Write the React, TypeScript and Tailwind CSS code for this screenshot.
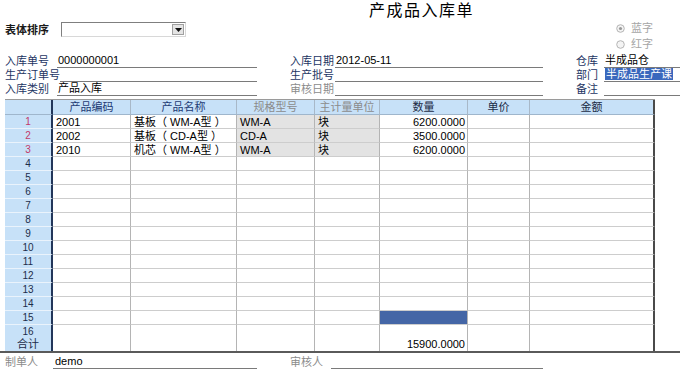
import React from "react";

const COLS = "grid-cols-[48px_78px_106px_78px_65px_88px_62px_125px]";

type Row = { n: string; code: string; name: string; spec: string; unit: string; qty: string };

const rows: Row[] = [
  { n: "1", code: "2001", name: "基板（ WM-A型 ）", spec: "WM-A", unit: "块", qty: "6200.0000" },
  { n: "2", code: "2002", name: "基板（ CD-A型 ）", spec: "CD-A", unit: "块", qty: "3500.0000" },
  { n: "3", code: "2010", name: "机芯（ WM-A型 ）", spec: "WM-A", unit: "块", qty: "6200.0000" },
];
for (let i = 4; i <= 15; i++) rows.push({ n: String(i), code: "", name: "", spec: "", unit: "", qty: "" });

function Field({
  label,
  value,
  labelW,
  lineW,
  grey,
  highlight,
}: {
  label: string;
  value?: string;
  labelW: string;
  lineW: string;
  grey?: boolean;
  highlight?: boolean;
}) {
  return (
    <div className="flex items-end h-full">
      <div className={`${labelW} shrink-0 leading-[13px] ${grey ? "text-[#8c8c8c]" : "text-[#1d3563]"}`}>{label}</div>
      <div className={`${lineW} h-full border-b border-[#7a7a7a] flex items-end pl-[1px]`}>
        {value ? (
          highlight ? (
            <span className="bg-[#3a68bd] text-white leading-[12px] h-[12px] px-[1px] mb-[1px] whitespace-nowrap">{value}</span>
          ) : (
            <span className="leading-[13px] text-black">{value}</span>
          )
        ) : null}
      </div>
    </div>
  );
}

function FieldRow({ h, a, b, c }: { h: string; a: React.ReactNode; b: React.ReactNode; c: React.ReactNode }) {
  return (
    <div className={`flex ${h}`}>
      <div className="w-[290px] pl-[5px] h-full">{a}</div>
      <div className="w-[286px] h-full">{b}</div>
      <div className="w-[104px] h-full">{c}</div>
    </div>
  );
}

export default function App() {
  const cell = "border-r border-b border-[#b4b4b4] border-b-[#cdcdcd] h-full";
  return (
    <div
      className="w-[680px] h-[370px] bg-white overflow-hidden text-[11px] text-black"
      style={{ fontFamily: '"Liberation Sans", "Noto Sans CJK SC", sans-serif' }}
    >
      {/* top area */}
      <div className="flex h-[55px]">
        <div className="w-[614px]">
          <div className="h-[22px] flex items-center pl-[369px] text-[16px] tracking-[1.5px] text-black">
            产成品入库单
          </div>
          <div className="h-[15px] flex items-center">
            <div className="w-[61px] pl-[5px] font-bold text-[#1a1a1a] leading-[14px]">表体排序</div>
            <div className="w-[125px] h-[15px] border border-[#7f7f7f] border-r-[#d8d8d8] border-b-[#d8d8d8] bg-white flex justify-end items-center pr-[1px]">
              <div className="w-[12px] h-[11px] bg-[#e4e4e4] border border-[#a0a0a0] flex items-center justify-center">
                <svg width="7" height="4" viewBox="0 0 7 4">
                  <polygon points="0,0 7,0 3.5,4" fill="#111" />
                </svg>
              </div>
            </div>
          </div>
        </div>
        <div className="w-[66px] pt-[20px] text-[#a6a6a6]">
          <div className="h-[16px] flex items-center gap-[6px] pl-[2px]">
            <svg width="9" height="9" viewBox="0 0 9 9">
              <circle cx="4.5" cy="4.5" r="3.8" fill="#f4f4f4" stroke="#b4b4b4" strokeWidth="1" />
              <circle cx="4.5" cy="4.5" r="1.6" fill="#9a9a9a" />
            </svg>
            <span className="leading-[12px]">蓝字</span>
          </div>
          <div className="h-[16px] flex items-center gap-[6px] pl-[2px]">
            <svg width="9" height="9" viewBox="0 0 9 9">
              <circle cx="4.5" cy="4.5" r="3.8" fill="#f4f4f4" stroke="#b4b4b4" strokeWidth="1" />
            </svg>
            <span className="leading-[12px]">红字</span>
          </div>
        </div>
      </div>

      {/* fields */}
      <FieldRow
        h="h-[13px]"
        a={<Field label="入库单号" value="0000000001" labelW="w-[52px]" lineW="w-[200px]" />}
        b={<Field label="入库日期" value="2012-05-11" labelW="w-[45px]" lineW="w-[208px]" />}
        c={<Field label="仓库" value="半成品仓" labelW="w-[28px]" lineW="w-[76px]" />}
      />
      <FieldRow
        h="h-[14px]"
        a={<Field label="生产订单号" labelW="w-[55px]" lineW="w-[197px]" />}
        b={<Field label="生产批号" labelW="w-[45px]" lineW="w-[208px]" />}
        c={<Field label="部门" value="半成品生产课" labelW="w-[28px]" lineW="w-[76px]" highlight />}
      />
      <FieldRow
        h="h-[14px]"
        a={<Field label="入库类别" value="产品入库" labelW="w-[52px]" lineW="w-[200px]" />}
        b={<Field label="审核日期" labelW="w-[45px]" lineW="w-[208px]" grey />}
        c={<Field label="备注" labelW="w-[28px]" lineW="w-[76px]" />}
      />

      {/* table */}
      <div className="mt-[3px] pl-[5px] border-b-2 border-[#5a5a5a] w-[680px]">
        <div className="w-[650px] border-t border-[#9a9a9a]">
          {/* header */}
          <div className={`grid ${COLS} h-[15px] bg-[#c7e1f8]`}>
            <div className="border-r-2 border-r-[#22365a] border-b border-b-[#9fb6cc] h-full"></div>
            <div className="border-r border-[#a8b8c8] border-b border-b-[#9fb6cc] h-full flex items-center justify-center text-[#1d3a74] leading-[13px]">产品编码</div>
            <div className="border-r border-[#a8b8c8] border-b border-b-[#9fb6cc] h-full flex items-center justify-center text-[#1d3a74] leading-[13px]">产品名称</div>
            <div className="border-r border-[#a8b8c8] border-b border-b-[#9fb6cc] h-full flex items-center justify-center text-[#8b8b8b] leading-[13px]">规格型号</div>
            <div className="border-r border-[#a8b8c8] border-b border-b-[#9fb6cc] h-full flex items-center justify-center text-[#8b8b8b] leading-[13px]">主计量单位</div>
            <div className="border-r border-[#a8b8c8] border-b border-b-[#9fb6cc] h-full flex items-center justify-center text-[#1b2b46] leading-[13px]">数量</div>
            <div className="border-r border-[#a8b8c8] border-b border-b-[#9fb6cc] h-full flex items-center justify-center text-[#1b2b46] leading-[13px]">单价</div>
            <div className="border-r-2 border-r-[#4a4a4a] border-b border-b-[#9fb6cc] h-full flex items-center justify-center text-[#1b2b46] leading-[13px]">金额</div>
          </div>
          {rows.map((r, i) => {
            const filled = i < 3;
            return (
              <div key={r.n} className={`grid ${COLS} h-[14px]`}>
                <div className={`bg-[#c7e1f8] border-r-2 border-r-[#22365a] border-b border-b-[#eaf3fc] h-full flex items-center justify-center text-[10px] leading-[12px] ${filled ? "text-[#c23a6a]" : "text-[#1d2d4a]"}`}>
                  {r.n}
                </div>
                <div className={`${cell} pl-[3px] flex items-center leading-[12px]`}>{r.code}</div>
                <div className={`${cell} pl-[3px] flex items-center leading-[12px] whitespace-pre`}>{r.name}</div>
                <div className={`${cell} pl-[3px] flex items-center leading-[12px] ${filled ? "bg-[#e3e3e3]" : ""}`}>{r.spec}</div>
                <div className={`${cell} pl-[3px] flex items-center leading-[12px] ${filled ? "bg-[#e3e3e3]" : ""}`}>{r.unit}</div>
                <div className={`${cell} pr-[2px] flex items-center justify-end leading-[12px] ${r.n === "15" ? "bg-[#4466a6]" : ""}`}>{r.qty}</div>
                <div className={`${cell}`}></div>
                <div className="border-r-2 border-r-[#4a4a4a] border-b border-b-[#cdcdcd] h-full"></div>
              </div>
            );
          })}
          {/* 16 / total */}
          <div className={`grid ${COLS} h-[26px]`}>
            <div className="bg-[#c7e1f8] border-r-2 border-r-[#22365a] h-full flex flex-col items-center justify-center text-[10px] leading-[12px] text-[#1d2d4a]">
              <span>16</span>
              <span className="text-[11px]">合计</span>
            </div>
            <div className="border-r border-[#b4b4b4] h-full"></div>
            <div className="border-r border-[#b4b4b4] h-full"></div>
            <div className="border-r border-[#b4b4b4] h-full"></div>
            <div className="border-r border-[#b4b4b4] h-full"></div>
            <div className="border-r border-[#b4b4b4] h-full flex items-end justify-end pr-[2px] pb-[1px] leading-[12px]">15900.0000</div>
            <div className="border-r border-[#b4b4b4] h-full"></div>
            <div className="border-r-2 border-r-[#4a4a4a] h-full"></div>
          </div>
        </div>
      </div>

      {/* footer */}
      <div className="flex h-[16px] items-end">
        <div className="w-[290px] pl-[5px] flex items-end h-full">
          <div className="w-[48px] text-[#8c8c8c] leading-[13px]">制单人</div>
          <div className="w-[204px] h-full border-b border-[#7a7a7a] flex items-end pl-[2px] leading-[13px]">demo</div>
        </div>
        <div className="flex items-end h-full">
          <div className="w-[41px] text-[#8c8c8c] leading-[13px]">审核人</div>
          <div className="w-[212px] h-full border-b border-[#7a7a7a]"></div>
        </div>
      </div>
    </div>
  );
}
